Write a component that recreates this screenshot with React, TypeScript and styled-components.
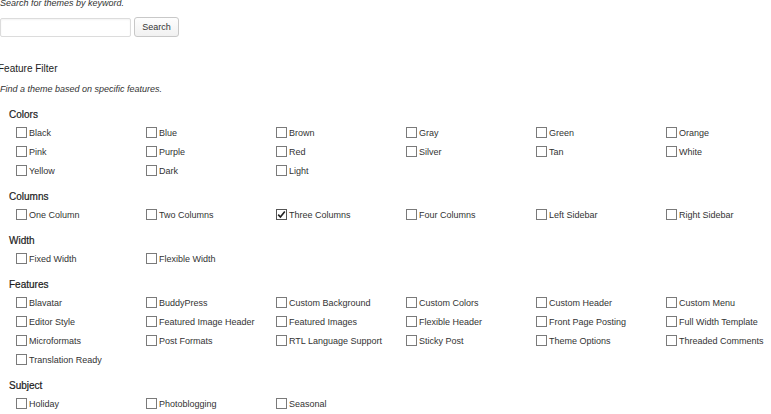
import React from 'react';
import styled, { createGlobalStyle } from 'styled-components';

const GlobalStyle = createGlobalStyle`
  html, body {
    margin: 0;
    padding: 0;
    background: #fff;
  }
  body {
    font-family: "Liberation Sans", Arial, sans-serif;
    color: #333;
    overflow: hidden;
  }
`;

interface IGroup {
  title: string;
  items: string[];
  checked?: string[];
}

const groups: IGroup[] = [
  {
    title: 'Colors',
    items: [
      'Black', 'Blue', 'Brown', 'Gray', 'Green', 'Orange',
      'Pink', 'Purple', 'Red', 'Silver', 'Tan', 'White',
      'Yellow', 'Dark', 'Light',
    ],
  },
  {
    title: 'Columns',
    items: [
      'One Column', 'Two Columns', 'Three Columns', 'Four Columns',
      'Left Sidebar', 'Right Sidebar',
    ],
    checked: ['Three Columns'],
  },
  {
    title: 'Width',
    items: ['Fixed Width', 'Flexible Width'],
  },
  {
    title: 'Features',
    items: [
      'Blavatar', 'BuddyPress', 'Custom Background', 'Custom Colors',
      'Custom Header', 'Custom Menu', 'Editor Style', 'Featured Image Header',
      'Featured Images', 'Flexible Header', 'Front Page Posting',
      'Full Width Template', 'Microformats', 'Post Formats',
      'RTL Language Support', 'Sticky Post', 'Theme Options',
      'Threaded Comments', 'Translation Ready',
    ],
  },
  {
    title: 'Subject',
    items: ['Holiday', 'Photoblogging', 'Seasonal'],
  },
];

/**
 * Theme search box plus the feature filter checklist
 */
export default function App() {
  return (
    <Page>
      <GlobalStyle />
      <SearchForm>
        <Hint>Search for themes by keyword.</Hint>
        <SearchRow>
          <SearchInput type="text" />
          <SearchButton type="button">Search</SearchButton>
        </SearchRow>
      </SearchForm>

      <FilterTitle>Feature Filter</FilterTitle>
      <FilterHint>Find a theme based on specific features.</FilterHint>

      {groups.map((group) => (
        <Group key={group.title}>
          <GroupTitle>{group.title}</GroupTitle>
          <Options>
            {group.items.map((item) => {
              const isChecked = (group.checked || []).includes(item);
              return (
                <Option key={item}>
                  <Box $checked={isChecked}>
                    {isChecked && (
                      <svg width="9" height="9" viewBox="0 0 9 9">
                        <path
                          d="M1.2 4.6 L3.4 7 L7.8 1.4"
                          fill="none"
                          stroke="#222"
                          strokeWidth="1.6"
                        />
                      </svg>
                    )}
                  </Box>
                  <OptionLabel>{item}</OptionLabel>
                </Option>
              );
            })}
          </Options>
        </Group>
      ))}
    </Page>
  );
}

// Styled Components Definitions
const Page = styled.div`
  margin-top: -3px;
  font-size: 9px;
`;

const SearchForm = styled.div`
  display: flex;
  flex-direction: column;
  gap: 8px;
`;

const Hint = styled.div`
  font-style: italic;
  font-size: 9px;
  line-height: 12px;
  color: #333;
`;

const SearchRow = styled.div`
  display: flex;
  align-items: center;
  gap: 3px;
`;

const SearchInput = styled.input`
  box-sizing: border-box;
  width: 131px;
  height: 19px;
  margin: 0;
  border: 1px solid #dcdcdc;
  border-radius: 2px;
  box-shadow: inset 0 1px 2px rgba(0, 0, 0, 0.05);
  font-family: inherit;
  font-size: 9px;
`;

const SearchButton = styled.button`
  box-sizing: border-box;
  width: 45px;
  height: 20px;
  margin: 0;
  padding: 0;
  border: 1px solid #c8c8c8;
  border-radius: 3px;
  background: linear-gradient(#fefefe, #f1f1f1);
  color: #333;
  font-family: inherit;
  font-size: 9px;
`;

const FilterTitle = styled.div`
  margin-top: 25px;
  margin-left: -2px;
  font-size: 10px;
  line-height: 14px;
  color: #222;
`;

const FilterHint = styled.div`
  margin-top: 7px;
  margin-bottom: 11px;
  font-style: italic;
  font-size: 9px;
  line-height: 12px;
`;

const Group = styled.div`
  margin-bottom: 8px;
`;

const GroupTitle = styled.div`
  padding-left: 9px;
  font-size: 10px;
  font-weight: 400;
  line-height: 17px;
  color: #1a1a1a;
  -webkit-text-stroke: 0.2px #1a1a1a;
`;

const Options = styled.div`
  display: grid;
  grid-template-columns: repeat(6, 130px);
  padding-left: 16px;
`;

const Option = styled.div`
  display: flex;
  align-items: center;
  gap: 2px;
  height: 19px;
  white-space: nowrap;
`;

const Box = styled.span<{ $checked: boolean }>`
  box-sizing: border-box;
  display: flex;
  align-items: center;
  justify-content: center;
  width: 11px;
  height: 11px;
  border: 1px solid ${(p) => (p.$checked ? '#555' : '#7a7a7a')};
  background: #fff;
`;

const OptionLabel = styled.span`
  font-size: 9px;
  color: #333;
`;
